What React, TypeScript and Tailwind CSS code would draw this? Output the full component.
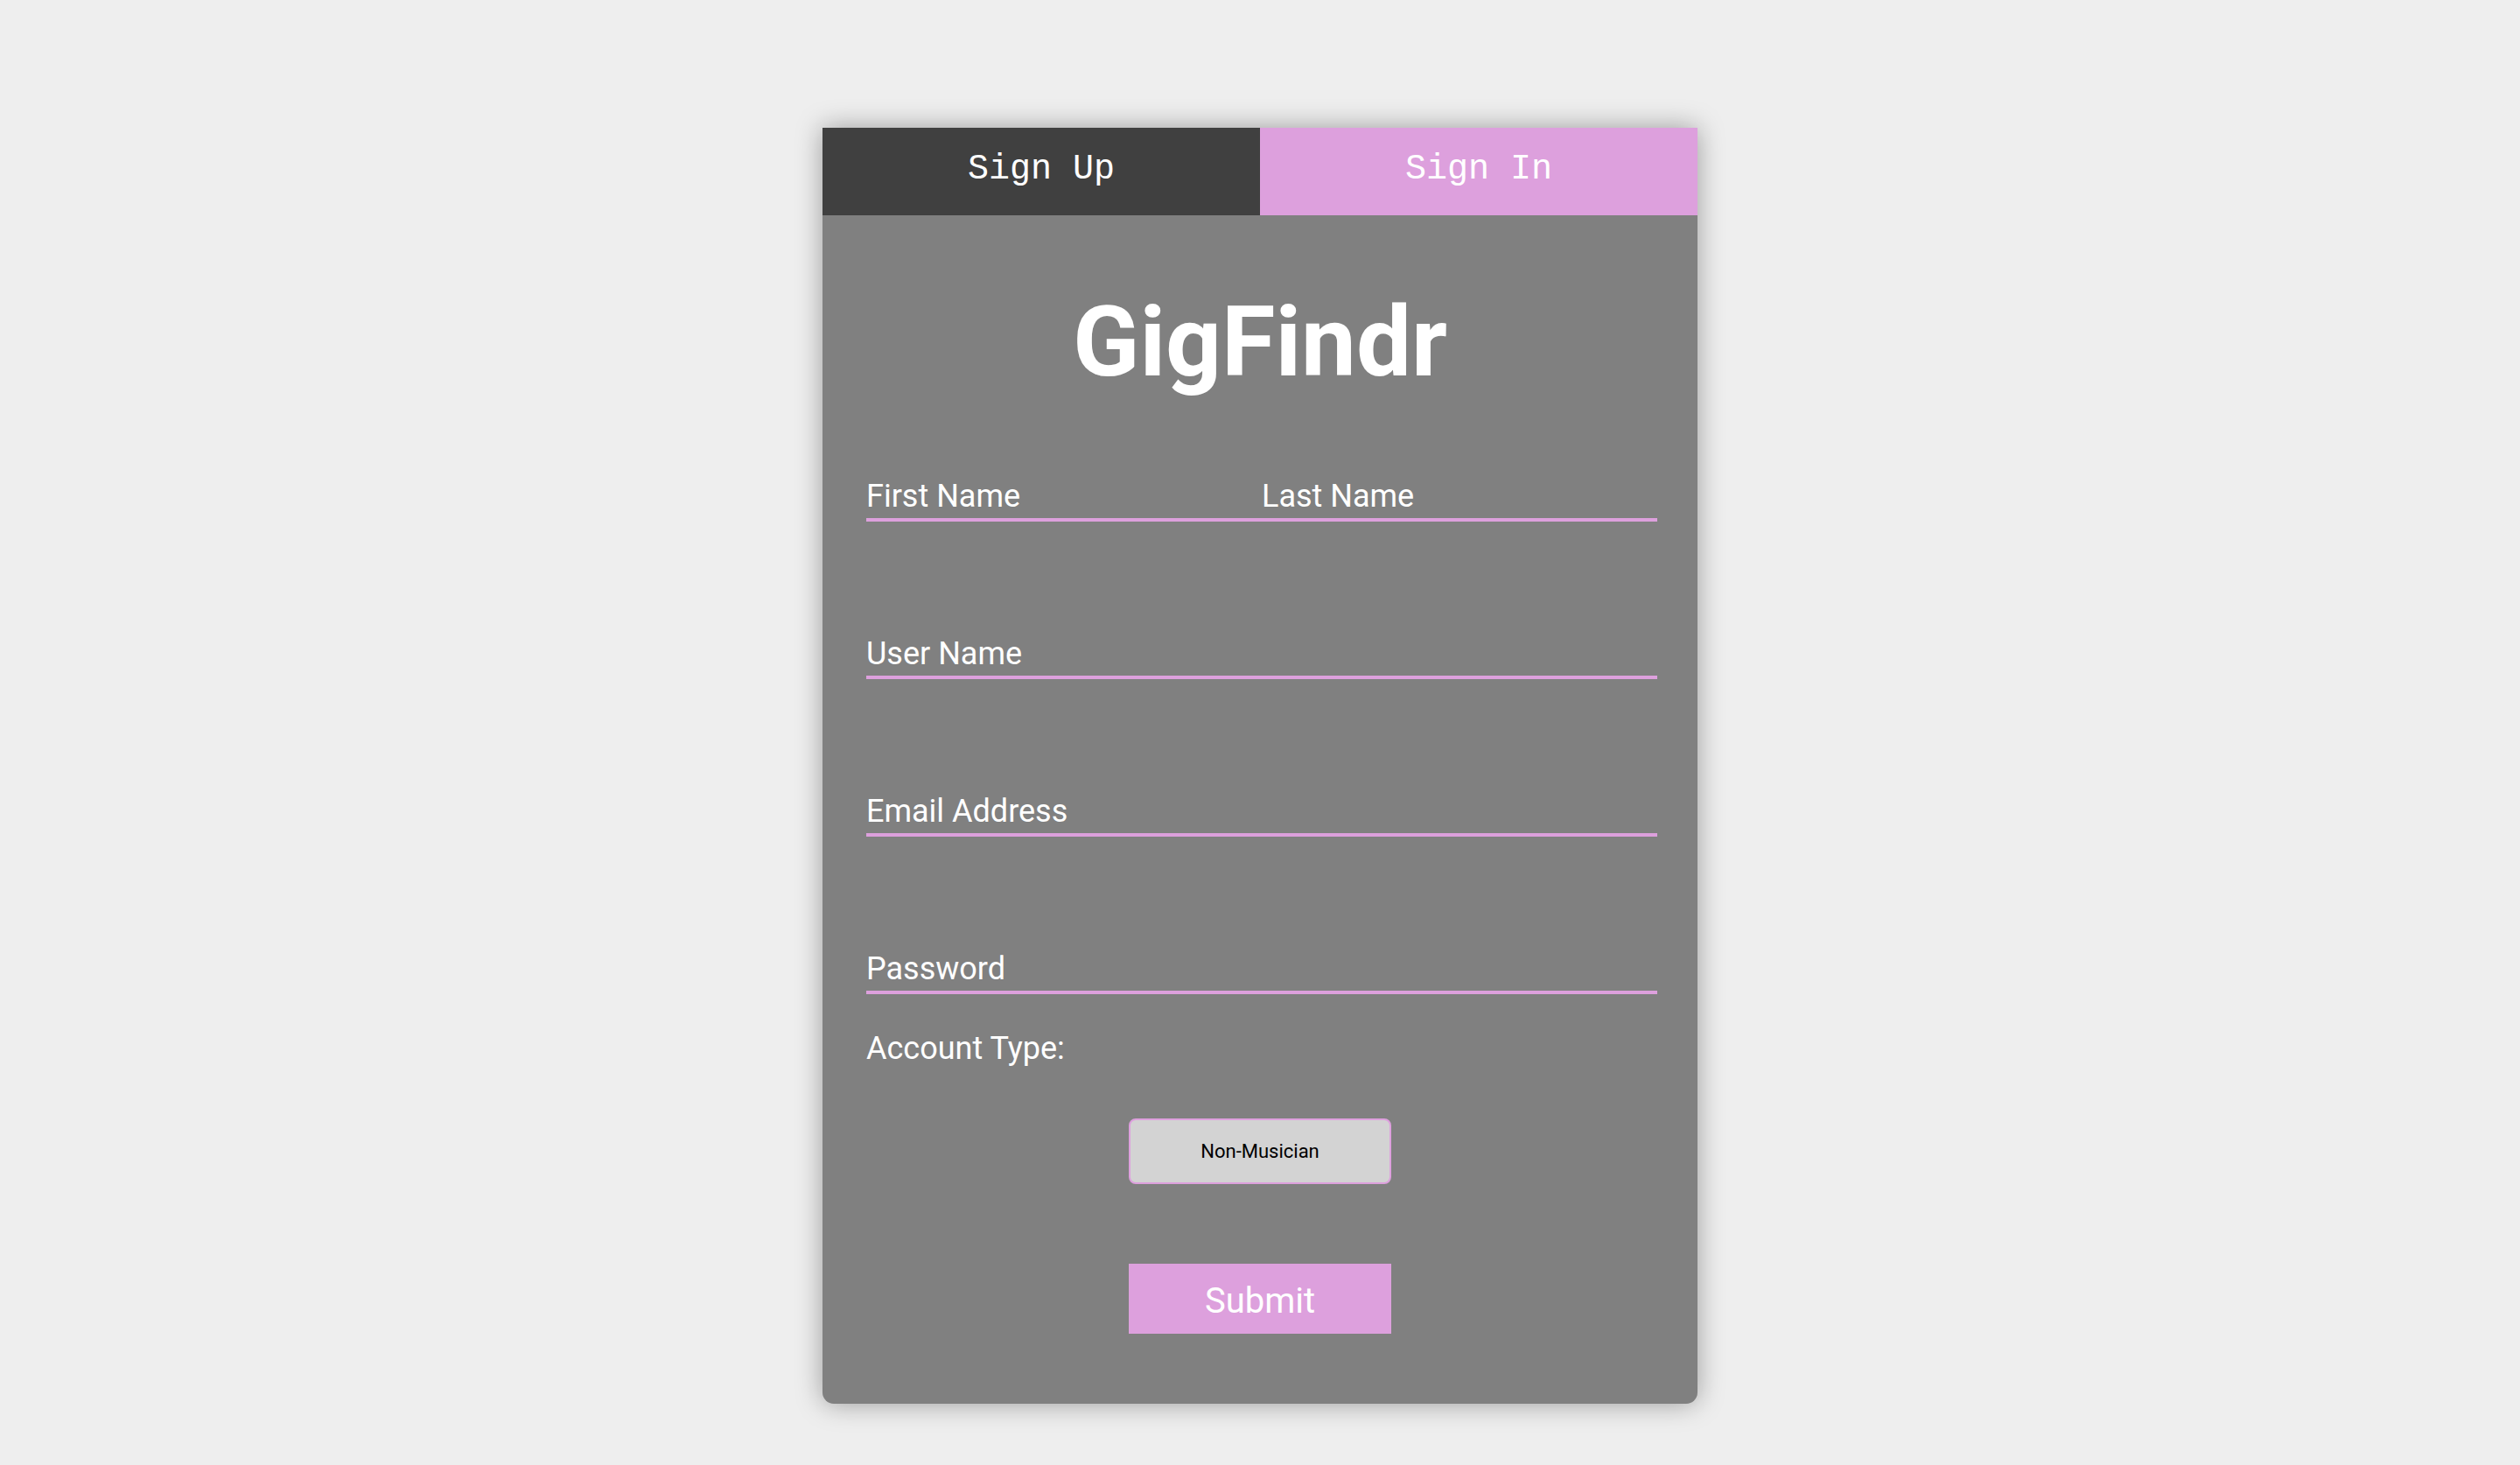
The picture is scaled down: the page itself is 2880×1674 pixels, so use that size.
import React, { useState } from "react";

const fields = [
  { id: "username", placeholder: "User Name", type: "text" },
  { id: "email", placeholder: "Email Address", type: "email" },
  { id: "password", placeholder: "Password", type: "password" },
];

const inputCls =
  "h-[58px] w-full bg-transparent border-0 border-b-4 border-[#dda0dd] pt-[3px] text-[36px] text-white placeholder:text-white outline-none font-['Roboto',sans-serif]";

export default function App() {
  const [tab, setTab] = useState<"up" | "in">("up");
  const [musician, setMusician] = useState(false);

  return (
    <div className="min-h-screen w-full bg-[#eeeeee] pt-[146px] pb-[70px]">
      <div className="mx-auto w-[1000px] rounded-b-[13px] bg-[#808080] shadow-[0_0_30px_rgba(0,0,0,0.35)] pb-[80px]">
        {/* tabs */}
        <div className="grid grid-cols-2 h-[100px] font-['Courier_New','Nimbus_Mono_PS','FreeMono','Liberation_Mono',monospace] text-[40px] font-normal text-white">
          <button
            onClick={() => setTab("up")}
            className="flex items-center justify-center bg-[#404040] pb-[5px]"
          >
            Sign Up
          </button>
          <button
            onClick={() => setTab("in")}
            className="flex items-center justify-center bg-[#dda0dd] pb-[5px]"
          >
            Sign In
          </button>
        </div>

        <h1 className="mt-[77px] text-center font-['Roboto',sans-serif] text-[112px] font-bold leading-[135px] text-white">
          GigFindr
        </h1>

        <form
          className="mt-[80px] font-['Roboto',sans-serif]"
          onSubmit={(e) => e.preventDefault()}
        >
          <div className="pl-[50px] pr-[46px]">
            <div className="grid grid-cols-2">
              <input className={inputCls} placeholder="First Name" />
              <input className={inputCls} placeholder="Last Name" />
            </div>

            {fields.map((f) => (
              <input
                key={f.id}
                type={f.type}
                className={`${inputCls} mt-[122px] block`}
                placeholder={f.placeholder}
              />
            ))}

            <p className="mt-[41px] text-[36px] leading-[42px] text-white">
              Account Type:
            </p>
          </div>

          <button
            type="button"
            onClick={() => setMusician(!musician)}
            className="mx-auto mt-[59px] block h-[75px] w-[300px] rounded-[8px] border-2 border-[#dda0dd] bg-[#d3d3d3] text-[22px] text-black"
          >
            {musician ? "Musician" : "Non-Musician"}
          </button>

          <button
            type="submit"
            className="mx-auto mt-[91px] block h-[80px] w-[300px] bg-[#dda0dd] pt-[6px] text-[40px] text-white"
          >
            Submit
          </button>
        </form>
      </div>
    </div>
  );
}
